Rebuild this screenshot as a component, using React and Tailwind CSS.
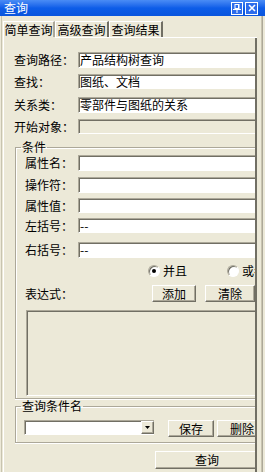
const sunken =
  "border-t border-l border-b border-t-[#aca899] border-l-[#aca899] border-b-white shadow-[inset_1px_1px_0_#716f64]";
const raised =
  "border border-t-white border-l-white border-r-[#716f64] border-b-[#716f64] shadow-[inset_-1px_-1px_0_#aca899] bg-[#ece9d8] flex items-center justify-center whitespace-nowrap";

function Field({ value, disabled, className }) {
  return (
    <div
      className={`flex-1 flex items-center pl-[1px] whitespace-nowrap overflow-hidden ${sunken} ${
        disabled ? "bg-[#ece9d8]" : "bg-white"
      } ${className || ""}`}
    >
      {value}
    </div>
  );
}

function Radio({ checked }) {
  return (
    <div className="w-[12px] h-[12px] shrink-0 rounded-full bg-white border border-t-[#aca899] border-l-[#aca899] border-r-white border-b-white shadow-[inset_1px_1px_0_#716f64] flex items-center justify-center">
      {checked && <div className="w-[4px] h-[4px] rounded-full bg-black" />}
    </div>
  );
}

export default function App() {
  return (
    <div className="w-[265px] h-[472px] overflow-hidden bg-[#ece9d8] flex flex-col text-[12px] leading-[12px] text-black font-['Noto_Sans_CJK_SC','Noto_Sans',sans-serif]">
      {/* title bar */}
      <div className="h-[16px] shrink-0 flex items-center bg-linear-to-b from-[#4a8cf5] via-[#0d5de8] to-[#0a55dd]">
        <span className="pl-[4px] text-white">查询</span>
        <div className="ml-auto mr-[7px] flex gap-[2px]">
          <div className="w-[12px] h-[13px] border border-white bg-[#2d6ceb] flex items-center justify-center">
            <svg width="8" height="9" viewBox="0 0 8 9">
              <rect x="2" y="0.5" width="4" height="4" fill="none" stroke="white" strokeWidth="1" />
              <rect x="5" y="0.5" width="1" height="4" fill="white" />
              <rect x="0" y="5" width="8" height="1" fill="white" />
              <rect x="3.5" y="6" width="1" height="3" fill="white" />
            </svg>
          </div>
          <div className="w-[13px] h-[13px] border border-white bg-[#2d6ceb] flex items-center justify-center">
            <svg width="8" height="8" viewBox="0 0 8 8">
              <path d="M1 1L7 7M7 1L1 7" stroke="white" strokeWidth="1.6" />
            </svg>
          </div>
        </div>
      </div>

      <div className="flex flex-1 min-h-0">
        {/* left window border */}
        <div className="w-[3px] shrink-0 flex">
          <div className="w-px" />
          <div className="w-px bg-[#c8c4b0]" />
        </div>

        {/* tabs + panel */}
        <div className="w-[254px] shrink-0 flex flex-col min-h-0">
          <div className="mt-[5px] h-[16px] flex shrink-0 whitespace-nowrap">
            <div className="w-[52px] border-l border-t border-white border-r-2 border-r-[#aca899] flex items-center justify-center">
              简单查询
            </div>
            <div className="w-[54px] border-l border-t border-white border-r-2 border-r-[#716f64] flex items-center justify-center">
              高级查询
            </div>
            <div className="w-[54px] border-l border-t border-white border-r-2 border-r-[#716f64] flex items-center justify-center">
              查询结果
            </div>
          </div>
          <div className="flex h-px shrink-0">
            <div className="w-[52px] border-l border-white" />
            <div className="flex-1 bg-white" />
          </div>
          <div className="flex-1 min-h-0 overflow-hidden border-l border-white border-r-2 border-r-[#716f64] flex flex-col">
            {/* top rows */}
            <div className="mt-[14px] h-[16px] flex">
              <div className="w-[74px] pl-[10px] flex items-center">查询路径：</div>
              <Field value="产品结构树查询" />
            </div>
            <div className="mt-[6px] h-[15px] flex">
              <div className="w-[74px] pl-[10px] flex items-center">查找：</div>
              <Field value="图纸、文档" />
            </div>
            <div className="mt-[8px] h-[16px] flex">
              <div className="w-[74px] pl-[10px] flex items-center">关系类：</div>
              <Field value="零部件与图纸的关系" />
            </div>
            <div className="mt-[6px] h-[15px] flex">
              <div className="w-[74px] pl-[10px] flex items-center">开始对象：</div>
              <Field value="" disabled />
            </div>

            {/* 条件 group */}
            <fieldset className="ml-[11px] mt-[7px] min-w-0 border-l border-t border-b border-[#aca899] shadow-[inset_1px_1px_0_white,0_1px_0_white]">
              <legend className="ml-[5px] px-[1px] leading-[12px]">条件</legend>
              <div className="flex flex-col pb-[2px]">
                <div className="mt-[2px] h-[16px] flex">
                  <div className="w-[62px] pl-[9px] flex items-center">属性名：</div>
                  <Field value="" />
                </div>
                <div className="mt-[6px] h-[16px] flex">
                  <div className="w-[62px] pl-[9px] flex items-center">操作符：</div>
                  <Field value="" />
                </div>
                <div className="mt-[5px] h-[15px] flex">
                  <div className="w-[62px] pl-[9px] flex items-center">属性值：</div>
                  <Field value="" />
                </div>
                <div className="mt-[5px] h-[15px] flex">
                  <div className="w-[62px] pl-[9px] flex items-center">左括号：</div>
                  <Field value="--" />
                </div>
                <div className="mt-[9px] h-[16px] flex">
                  <div className="w-[62px] pl-[9px] flex items-center">右括号：</div>
                  <Field value="--" />
                </div>
                <div className="mt-[5px] h-[15px] flex items-center whitespace-nowrap">
                  <div className="ml-[132px] flex items-center gap-[3px]">
                    <Radio checked />
                    <span>并且</span>
                  </div>
                  <div className="ml-[40px] flex items-center gap-[3px]">
                    <Radio />
                    <span>或者</span>
                  </div>
                </div>
                <div className="mt-[7px] h-[17px] flex">
                  <div className="w-[145px] pl-[9px] flex items-center">表达式：</div>
                  <div className={`w-[47px] h-[17px] ${raised}`}>添加</div>
                  <div className={`ml-[9px] w-[50px] shrink-0 h-[17px] ${raised}`}>清除</div>
                </div>
                <div className={`mt-[8px] ml-[10px] h-[86px] bg-[#ece9d8] ${sunken}`} />
              </div>
            </fieldset>

            {/* 查询条件名 group */}
            <fieldset className="ml-[11px] mt-[1px] min-w-0 border-l border-t border-b border-[#aca899] shadow-[inset_1px_1px_0_white,0_1px_0_white]">
              <legend className="ml-[5px] px-[1px] leading-[12px]">查询条件名</legend>
              <div className="mt-[8px] pb-[5px] h-[22px] flex items-start">
                <div className={`ml-[8px] w-[130px] h-[15px] shrink-0 bg-white flex justify-end ${sunken}`}>
                  <div className={`w-[13px] h-[13px] ${raised}`}>
                    <svg width="5" height="3" viewBox="0 0 5 3">
                      <path d="M0 0H5L2.5 3Z" fill="black" />
                    </svg>
                  </div>
                </div>
                <div className={`ml-[14px] w-[46px] h-[17px] shrink-0 ${raised}`}>保存</div>
                <div className={`ml-[3px] w-[50px] h-[17px] shrink-0 ${raised}`}>删除</div>
              </div>
            </fieldset>

            <div className="mt-[8px] flex">
              <div className={`ml-[151px] w-[104px] h-[18px] shrink-0 ${raised}`}>查询</div>
            </div>
          </div>
        </div>

        {/* right window border */}
        <div className="flex-1 flex">
          <div className="w-[4px]" />
          <div className="w-px bg-[#c8c4b0]" />
          <div className="w-px bg-[#aca899]" />
        </div>
      </div>
    </div>
  );
}
